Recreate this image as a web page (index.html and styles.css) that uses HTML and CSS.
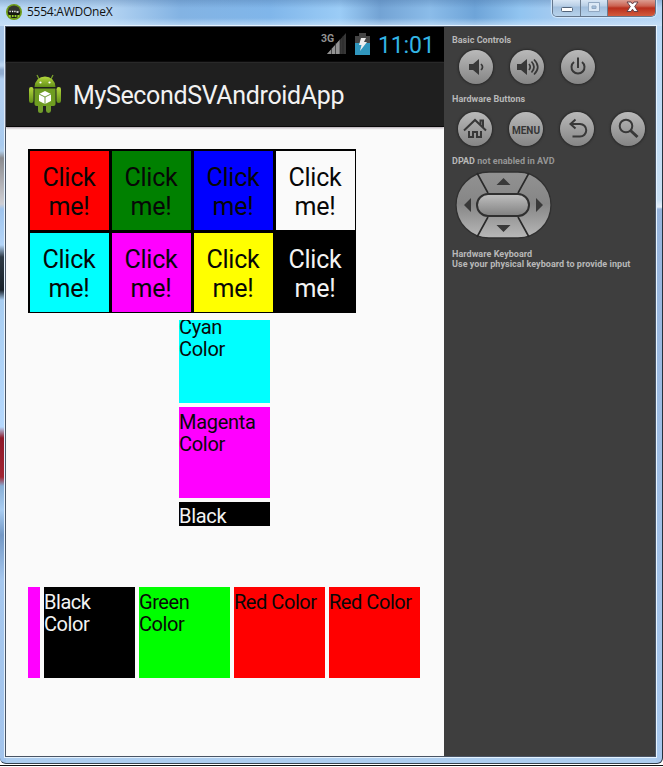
FILE: index.html
```html
<!DOCTYPE html>
<html lang="en">
<head>
<meta charset="utf-8">
<title>5554:AWDOneX</title>
<link rel="stylesheet" href="styles.css">
</head>
<body>
<div class="window">
  <header class="titlebar">
    <svg class="app-icon" width="16" height="16" viewBox="0 0 16 16"><circle cx="8" cy="8" r="8" fill="#6f9d18"/><circle cx="8" cy="7.8" r="6.3" fill="#34372f"/><path d="M2 8h12a6 6 0 0 1-12 0z" fill="#15180f"/><path d="M3.5 7.5h1.2M6 7.5h1.2M8.3 7.5h1.2M10.5 8h2" stroke="#fff" stroke-width="1.4"/><path d="M3 12h10" stroke="#9bd02c" stroke-width="2" stroke-dasharray="1.8 1"/></svg>
    <span class="caption">5554:AWDOneX</span>
    <div class="controls">
      <span class="control minimize"><svg width="28" height="17" viewBox="0 0 28 17"><rect x="8.5" y="7.5" width="11" height="4" rx="1" fill="#fff" stroke="#53647a"/></svg></span>
      <span class="control maximize"><svg width="26" height="17" viewBox="0 0 26 17"><path d="M7.500 2.500h11v9h-11zM11 6v2.500h4V6z" fill="#dce9f6" fill-rule="evenodd" stroke="#91a8c2"/></svg></span>
      <span class="control close"><svg width="47" height="17" viewBox="0 0 47 17"><path d="M19 2h4l1.500 2L26 2h4l-3.300 4.500L30 11.500h-4l-1.500-2.300L23 11.500h-4l3.300-5z" fill="#fff" stroke="#654047"/></svg></span>
    </div>
  </header>
  <main class="client">
    <section class="phone">
      <div class="status">
        <svg class="signal" width="27" height="24" viewBox="0 0 27 24"><path d="M6 22L25 1v21z" fill="#373737"/><path d="M6 22L19 7.600V22z" fill="#929292"/><path d="M10.500 16v6M14.500 11v11M19 7v15M22 4v18" stroke="#252525" stroke-width=".7"/><text x="0" y="10" class="network">3G</text></svg>
        <svg class="battery" width="15" height="22" viewBox="0 0 15 22"><path d="M4 0h7v3h4v7H0V3h4z" fill="#444"/><path d="M0 10h15v12H0z" fill="#3096bd"/><path d="M6 5h5l-2 4h3l-7 9 1.500-6H4z" fill="#eee"/></svg>
        <span class="clock">11:01</span>
      </div>
      <div class="actionbar">
        <svg class="robot" width="34" height="40" viewBox="0 0 34 40">
          <defs><linearGradient id="robot" x1="0" y1="0" x2="0" y2="1"><stop offset="0" stop-color="#b5d83d"/><stop offset="1" stop-color="#628f18"/></linearGradient></defs>
          <path d="M11 5L9 1M23 5l2-4" stroke="#789e2c" stroke-width="1.300"/>
          <path d="M6.500 13a10.500 10.500 0 0 1 21 0z" fill="url(#robot)"/>
          <path d="M6.500 14.500h21V30q0 2-2 2h-17q-2 0-2-2z" fill="#6f9d21"/>
          <rect x="1" y="13" width="4.500" height="16" rx="2.200" fill="url(#robot)"/><rect x="28.500" y="13" width="4.500" height="16" rx="2.200" fill="url(#robot)"/>
          <path d="M10 32h5v4.500a2.500 2.500 0 0 1-5 0zM18 32h5v4.500a2.500 2.500 0 0 1-5 0z" fill="#719d2a"/>
          <circle cx="12.500" cy="8.500" r="1.100" fill="#fff"/><circle cx="21.500" cy="8.500" r="1.100" fill="#fff"/>
          <path d="M17 17l6 3v7l-6 3-6-3v-7z" fill="#fff"/><path d="M11 20l6 3 6-3M17 23v7" fill="none" stroke="#719b38"/>
        </svg>
        <h1>MySecondSVAndroidApp</h1>
      </div>
      <div class="content">
        <div class="grid">
          <div class="cell red">Click<br>me!</div><div class="cell forest">Click<br>me!</div><div class="cell blue">Click<br>me!</div><div class="cell white">Click<br>me!</div>
          <div class="cell cyan">Click<br>me!</div><div class="cell magenta">Click<br>me!</div><div class="cell yellow">Click<br>me!</div><div class="cell black">Click<br>me!</div>
        </div>
        <div class="vertical-list">
          <div class="tile cyan"><div class="scrolled">Cyan<br>Color</div></div>
          <div class="tile magenta">Magenta<br>Color</div>
          <div class="tile black">Black</div>
        </div>
        <div class="horizontal-list">
          <div class="tile magenta"></div>
          <div class="tile black">Black<br>Color</div>
          <div class="tile green">Green<br>Color</div>
          <div class="tile red">Red Color</div>
          <div class="tile red">Red Color</div>
        </div>
      </div>
    </section>
    <aside class="panel">
      <h2>Basic Controls</h2>
      <div class="buttons basic">
        <span class="round"><svg width="34" height="34" viewBox="0 0 34 34"><path d="M10 14h4l6-5v16l-6-5h-4z" fill="#383838"/><path d="M22 14q3 3 0 6" class="stroke"/></svg></span>
        <span class="round"><svg width="34" height="34" viewBox="0 0 34 34"><path d="M7 14h4l6-5v16l-6-5H7z" fill="#383838"/><path d="M19 14q2.500 3 0 6M21.500 11.500q5 5.500 0 11M24 9.500q7.500 7.500 0 15" class="stroke"/></svg></span>
        <span class="round"><svg width="34" height="34" viewBox="0 0 34 34"><path d="M13 12a6.500 6.500 0 1 0 8 0M17 7.500V18" class="stroke power"/></svg></span>
      </div>
      <h2>Hardware Buttons</h2>
      <div class="buttons hardware">
        <span class="round"><svg width="34" height="34" viewBox="0 0 34 34"><path d="M6 18.500L17 8l11 10.500M22.500 13V8.500h2.500V15M11 19v6h4v-5h4v5h4v-6" class="stroke home"/></svg></span>
        <span class="round menu">MENU</span>
        <span class="round"><svg width="34" height="34" viewBox="0 0 34 34"><path d="M15.500 7.500l-5 4.500 5 4.500M10.500 12H20a6 6 0 0 1 0 12.500h-7.500" class="stroke back"/></svg></span>
        <span class="round"><svg width="34" height="34" viewBox="0 0 34 34"><circle cx="15" cy="14" r="6.300" class="stroke search"/><path d="M19.500 18.500l7 6.500" class="stroke handle"/></svg></span>
      </div>
      <h2 class="dpad-title">DPAD <span>not enabled in AVD</span></h2>
      <svg class="dpad" width="98" height="68" viewBox="0 0 98 68">
        <defs><linearGradient id="pad" x1="0" y1="0" x2="0" y2="1"><stop offset="0" stop-color="#929292"/><stop offset=".48" stop-color="#868686"/><stop offset="1" stop-color="#b8b8b8"/></linearGradient><linearGradient id="center" x1="0" y1="0" x2="0" y2="1"><stop offset="0" stop-color="#c0c0c0"/><stop offset="1" stop-color="#808080"/></linearGradient></defs>
        <rect x="1" y="1" width="95" height="66" rx="33" fill="url(#pad)" stroke="#303030" stroke-width="1.300"/>
        <path d="M22 2l11 20M74 2L63 22M22 66l11-20M74 66L63 46" stroke="#292929" stroke-width="1.600"/>
        <rect x="22" y="23" width="52" height="22" rx="11" fill="url(#center)" stroke="#303030" stroke-width="2"/>
        <path d="M41.500 14h14L48.500 7zM41.500 54h14l-7 7zM16 27v14l-7-7zM81 27v14l7-7z" fill="#393939"/>
      </svg>
      <p class="keyboard">Hardware Keyboard<br>Use your physical keyboard to provide input</p>
    </aside>
  </main>
</div>
<div class="desktop-edge"></div>
</body>
</html>
```
FILE: styles.css
```css
* { box-sizing: border-box; }
body { margin: 0; background: #fff; font-family: Roboto, sans-serif; width: 663px; height: 767px; overflow: hidden; }
.window {
  width: 663px; height: 764px; padding: 0 6px 7px 5px;
  border-right: 1px solid #26313c; border-bottom: 1px solid #35414d; border-radius: 0 0 6px 6px;
  background:
    linear-gradient(#b4d7f8, #c7def2 200px, #e5effa 207px, #96b4dc 209px, #a7c8ee 100%) right / 6px 100% no-repeat,
    linear-gradient(#a5c4e6 0 60px, #bad4f1 64px 66px, #90acd0 70px 74px, #b1cff1 79px 100px, #a8caee 145px, #b2cfeb 151px, #8b8c90 158px, #cfcfd4 204px, #9fc4ed 209px, #b4d5f8 245px, #2d3945 257px, #18212a 290px, #a8cdf1 300px, #b5d8fd 427px, #8d1829 438px, #a12533 477px, #88afd6 486px, #a8ccf1 510px, #7499c6 535px, #a5c7ee 580px, #a3c4ec 100%) left / 6px 100% no-repeat,
    #accdef;
}
.titlebar { height: 26px; display: flex; align-items: flex-start; margin: 0 -6px 0 -5px; padding-left: 6px; background: linear-gradient(rgba(65,105,155,.3), transparent 8px 18px, rgba(205,228,250,.7)), linear-gradient(90deg, #bad9f5, #b3d3f2 110px, #83b3e3 180px, #80b6ea 270px, #9bccf6 340px, #73a3d4 380px, #8bbce9 430px, #6ea4d8 475px, #91c4f0 520px, #accdf0 570px, #b5d5f5); }
.app-icon { margin-top: 4px; }
.caption { margin: 4px 0 0 5px; font: 12px/16px "Open Sans", "Noto Sans", sans-serif; letter-spacing: -.25px; color: #111; }
.controls { display: flex; height: 17px; margin-left: auto; margin-right: 6px; border: 1px solid #64768c; border-top: 0; border-radius: 0 0 5px 5px; overflow: hidden; box-shadow: 0 0 1px 1px #d4e9fd; }
.control { height: 16px; background: linear-gradient(#d8e6f5, #b9cfe6 6px, #a2bfdd 7px, #b7d2eb); border-right: 1px solid #6c7c8f; }
.control svg { display: block; }
.minimize { width: 28px; }
.maximize { width: 27px; }
.close { width: 47px; border: 0; background: linear-gradient(#dc9d91, #cb6251 6px, #b92f1d 8px, #d35b3c); }
.client { display: flex; height: 731px; border: 1px solid #495464; box-shadow: 0 0 0 1px #e5f2fe; }
.phone { width: 438px; flex: none; background: #fafafa; }
.status { height: 35px; background: #000; display: flex; align-items: flex-start; padding: 6px 9px 0 315px; }
.signal { margin-top: -1px; }
.network { font: bold 10.5px Roboto, sans-serif; fill: #929292; }
.battery { margin-left: 7px; }
.clock { margin: 1px 0 0 8px; font-size: 23px; line-height: 24px; color: #33b5e5; letter-spacing: -.15px; }
.actionbar { height: 65px; background: #1f1f1f; border-top: 1px solid #292929; border-bottom: 1px solid #080808; display: flex; align-items: center; padding-left: 22px; box-shadow: 0 1px 2px #a99fa7; }
.robot { flex: none; margin-top: -1px; }
h1 { margin: 2px 0 0 11px; font-size: 25px; font-weight: 400; line-height: 30px; color: #f2f2f2; letter-spacing: -.35px; }
.content { display: flex; flex-direction: column; align-items: flex-start; padding: 22px 0 0 22px; }
.grid { width: 328px; height: 164px; display: grid; grid-template-columns: repeat(4, 79px); grid-template-rows: repeat(2, 79px); gap: 3px; padding: 2px 1px 1px 2px; background: #000; }
.cell { display: flex; align-items: center; justify-content: center; text-align: center; font-size: 25px; line-height: 29px; letter-spacing: -.2px; color: #070707; padding: 3px 1px 0 0; }
.vertical-list { width: 91px; height: 206px; margin: 7px 0 0 151px; overflow: hidden; display: flex; flex-direction: column; gap: 4px; }
.tile { width: 91px; height: 91px; flex: none; padding-top: 4px; font-size: 20px; line-height: 22px; letter-spacing: -.45px; color: #080808; white-space: nowrap; }
.vertical-list .tile { letter-spacing: -.3px; }
.vertical-list .tile:first-child { height: 83px; padding: 0; }
.scrolled { margin-top: -4px; }
.vertical-list .tile:last-child { height: 24px; line-height: 20px; }
.horizontal-list { display: flex; width: 392px; gap: 4px; margin-top: 61px; overflow: hidden; }
.horizontal-list .tile:first-child { width: 12px; }
.red { background: #f00; }
.forest { background: #008000; }
.blue { background: #00f; }
.white { background: #fafafa; }
.cyan { background: #0ff; }
.magenta { background: #f0f; }
.yellow { background: #ff0; }
.green { background: #0f0; }
.black { background: #000; color: #f3f3f3; }
.panel { flex: 1; background: #3e3e3e; padding: 8px 0 0 8px; min-width: 0; }
h2 { margin: 0; font-size: 9px; line-height: 11px; color: #b8b8b8; font-weight: 700; white-space: nowrap; letter-spacing: .03px; }
h2 span { color: #969696; }
.buttons { display: flex; gap: 17px; height: 34px; }
.basic { margin: 4px 0 10px 7px; }
.hardware { margin: 7px 0 10px 6px; }
.round { width: 34px; height: 34px; flex: none; border-radius: 50%; background: linear-gradient(#b9b9b9, #858585); box-shadow: 0 0 2px 1px #292929; }
.round svg { display: block; }
.menu { display: flex; align-items: center; justify-content: center; font-size: 10px; font-weight: 700; color: #363636; padding-top: 2px; }
.stroke { fill: none; stroke: #383838; stroke-width: 1.700; }
.power, .home, .back, .search { stroke-width: 2; }
.handle { stroke-width: 3; }
.dpad { display: block; margin: 4px 0 0 3px; }
.keyboard { margin: 10px 0 0; font-size: 9px; line-height: 10px; font-weight: 700; color: #b8b8b8; white-space: nowrap; letter-spacing: .05px; }
.desktop-edge { height: 1px; margin-top: 1px; background: #111; }
```
